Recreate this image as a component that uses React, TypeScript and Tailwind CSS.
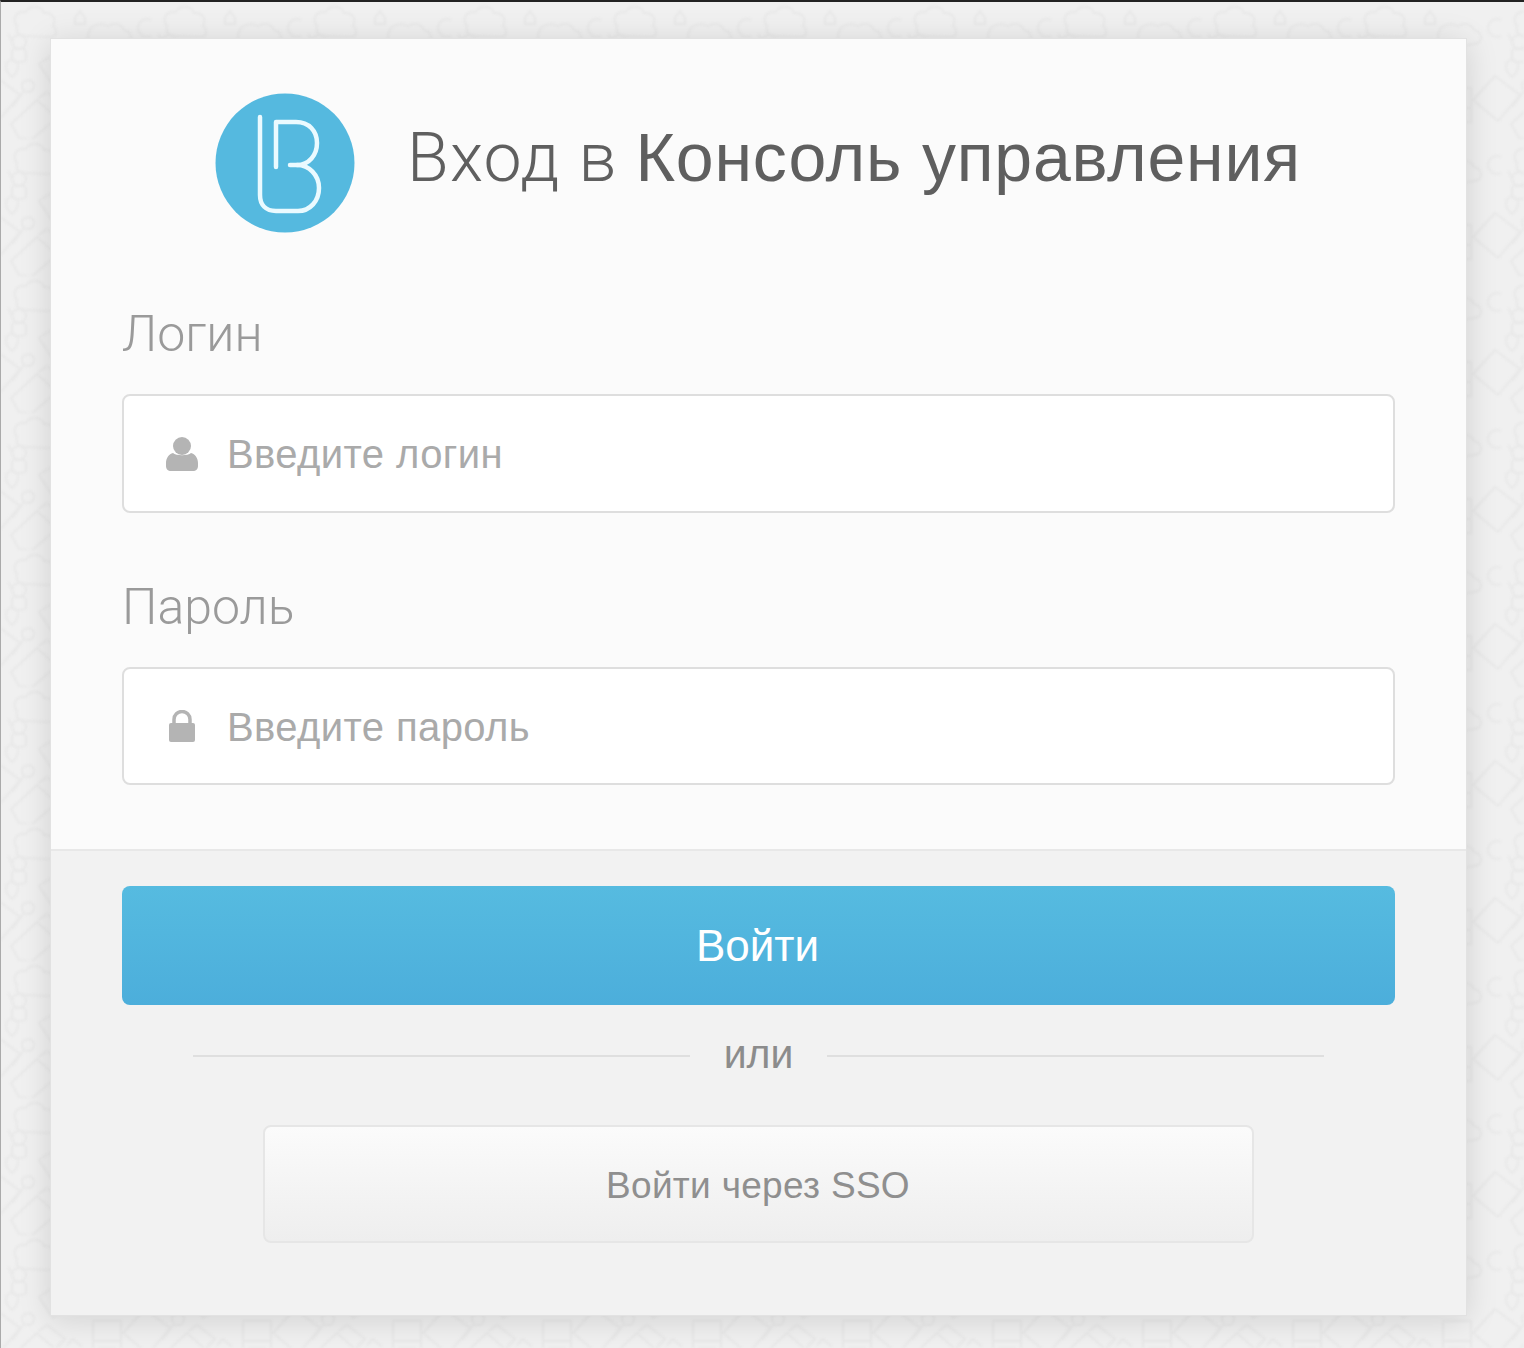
import React from "react"

// faint doodles repeated over the page background
function Doodles() {
  return (
    <svg className="absolute inset-0 w-full h-full blur-[1px]" xmlns="http://www.w3.org/2000/svg">
      <defs>
        <pattern id="doodles" width="150" height="137" patternUnits="userSpaceOnUse">
          <g fill="none" stroke="#e8e8e8" strokeWidth="2" strokeLinejoin="round" strokeLinecap="round">
            {/* cloud */}
            <path d="M16 24c-6-7 0-16 9-14 4-7 15-7 18 1 8-1 13 6 9 13 6 4 3 12-4 11l-24-1c-6 0-10-5-8-10z" />
            {/* second cloud */}
            <path d="M88 30c2-7 12-10 19-6 6-4 14-2 16 4 7 1 9 9 4 13l-30 6c-8 0-12-11-9-17z" />
            {/* lock */}
            <circle cx="18" cy="40" r="7" />
            <path d="M11 50c0-5 14-5 14 0v7c0 4-14 4-14 0z" />
            {/* phone */}
            <path d="M38 62l14-9 14 21-14 9z" />
            {/* key */}
            <circle cx="27" cy="84" r="6" />
            <path d="M23 89l-11 15" />
            {/* eraser */}
            <path d="M10 122l26-24 20 18-26 22-12-2zM38 96l8-6 18 14-8 8" />
            {/* note with lines */}
            <path d="M92 86h28v34H92zM92 106h28M98 113h16" />
            {/* tag */}
            <path d="M144 74l25 19-22 26-25-21z" />
            <path d="M144 74l-25 19 28 26 22-26z" transform="translate(-150 0)" />
            {/* magnifier */}
            <circle cx="146" cy="26" r="9" />
            <path d="M8 33l6 14M152 33l10 14" />
            {/* pin */}
            <path d="M5 64c0-8 12-8 12 0 0 6-6 11-6 11s-6-5-6-11z" />
            {/* small bag */}
            <path d="M74 16l5-7 5 7v6H74z" />
            <path d="M66 110l6-6 8 7M70 122h14" />
          </g>
        </pattern>
      </defs>
      <rect width="100%" height="100%" fill="url(#doodles)" />
    </svg>
  )
}

function Logo() {
  return (
    <svg width="140" height="140" viewBox="0 0 140 140" className="shrink-0">
      <circle cx="70" cy="70" r="69.5" fill="#55b9df" />
      <g fill="none" stroke="#eafaff" strokeWidth="4.500" strokeLinecap="round" strokeLinejoin="round">
        <path d="M45 24v78c0 10 6 16 16 16h22c12 0 21-10 21-23 0-13-10-23-22-23h-7" />
        <path d="M61 74V29h20c13 0 21 9 21 21 0 12-8 22-20 22" />
      </g>
    </svg>
  )
}

function UserIcon() {
  return (
    <svg width="32" height="36" viewBox="0 0 32 36" fill="#b4b4b4" className="shrink-0">
      <circle cx="16" cy="10" r="9" />
      <path d="M7 17c3 3 15 3 18 0 4 1 7 5 7 10v3c0 3-2 5-5 5H5c-3 0-5-2-5-5v-3c0-5 3-9 7-10z" />
    </svg>
  )
}

function LockIcon() {
  return (
    <svg width="26" height="32" viewBox="0 0 26 32" fill="#b4b4b4" className="shrink-0">
      <path d="M5 14V9.500a8 8 0 0 1 16 0V14" fill="none" stroke="#b4b4b4" strokeWidth="3.500" />
      <rect x="0" y="13" width="26" height="19" rx="2" />
    </svg>
  )
}

export default function App() {
  return (
    <div className="relative h-[1348px] overflow-hidden bg-[#f0f0f0] border-t-2 border-l border-t-[#222] border-l-[#aaa] pt-[36px] pl-[49px] font-['Liberation_Sans',sans-serif]">
      <Doodles />

      <div className="relative w-[1417px] h-[1278px] flex flex-col border border-[#e2e2e2] shadow-[0_4px_30px_rgba(0,0,0,0.13)]">
        {/* Form */}
        <div className="h-[812px] bg-[#fbfbfb] border-b-2 border-[#e8e8e8] px-[71px]">
          <div className="flex items-center pt-[54px] pl-[93px] gap-[52px]">
            <Logo />
            <h1 className="text-[68px] leading-[76px] text-[#5f5f5f] -mt-3 whitespace-nowrap">
              <span className="font-['Roboto'] font-light tracking-[1.2px]">Вход в </span>
              <span className="font-normal tracking-[0.8px]">Консоль управления</span>
            </h1>
          </div>

          <label className="block mt-[71px] text-[50px] leading-[60px] text-[#9a9a9a] font-['Roboto'] font-light">Логин</label>
          <div className="mt-[30px] h-[119px] flex items-center pl-[42px] bg-white border-2 border-[#dedede] rounded-lg">
            <UserIcon />
            <span className="ml-[29px] text-[40px] tracking-[0.4px] text-[#aaaaaa]">Введите логин</span>
          </div>

          <label className="block mt-[64px] text-[50px] leading-[60px] text-[#9a9a9a] font-['Roboto'] font-light">Пароль</label>
          <div className="mt-[30px] h-[118px] flex items-center pl-[45px] bg-white border-2 border-[#dedede] rounded-lg">
            <LockIcon />
            <span className="ml-[32px] pt-px text-[40px] tracking-[0.4px] text-[#aaaaaa]">Введите пароль</span>
          </div>
        </div>

        {/* Actions */}
        <div className="flex-1 bg-[#f2f2f2] px-[71px] pt-[35px]">
          <button className="w-full h-[119px] pr-[2px] rounded-lg bg-gradient-to-b from-[#56bbe0] to-[#4caedb] text-white text-[44px]">
            Войти
          </button>

          <div className="flex items-center gap-[34px] mt-[27px] px-[71px]">
            <div className="flex-1 h-[2px] bg-[#dfdfdf]" />
            <span className="text-[41px] leading-[44px] pb-[4px] text-[#8c8c8c]">или</span>
            <div className="flex-1 h-[2px] bg-[#dfdfdf]" />
          </div>

          <div className="flex justify-center mt-[45px]">
            <button className="w-[991px] h-[118px] pt-[4px] -ml-px rounded-lg border-2 border-[#e6e6e6] bg-gradient-to-b from-[#fbfbfb] to-[#eeeeee] text-[37px] tracking-[0.3px] text-[#8f8f8f]">
              Войти через SSO
            </button>
          </div>
        </div>
      </div>
    </div>
  )
}
